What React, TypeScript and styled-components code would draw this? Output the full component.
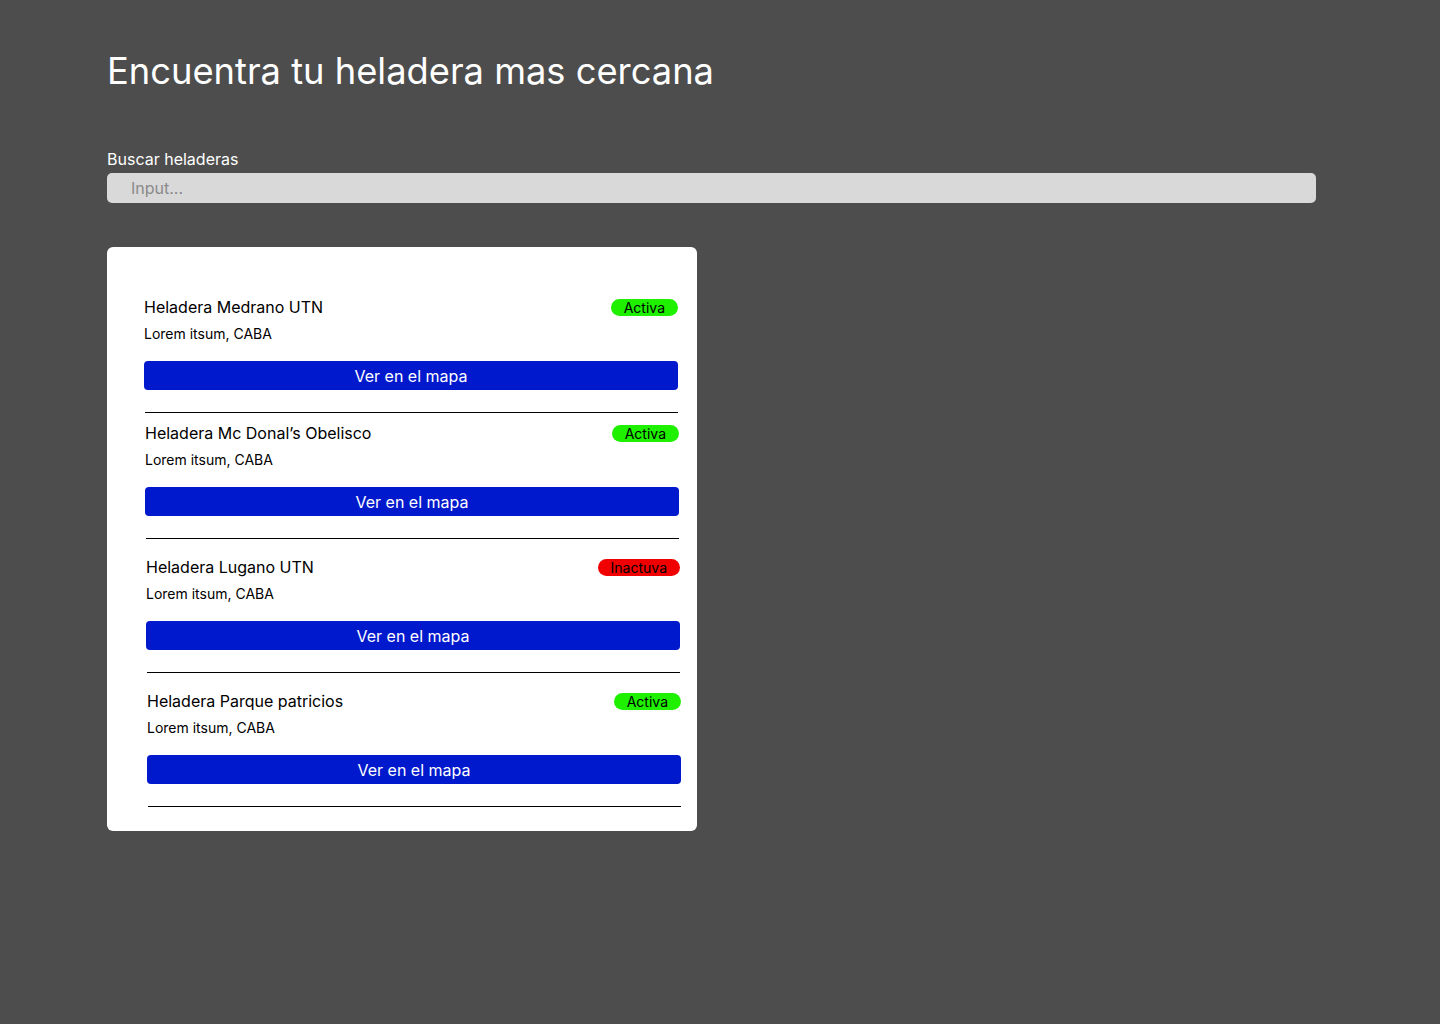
import React from "react";
import styled, { createGlobalStyle } from "styled-components";

const GlobalStyle = createGlobalStyle`
  * { box-sizing: border-box; }
  html, body { margin: 0; padding: 0; background: #4d4d4d; }
  body { font-family: Inter, "Noto Sans", sans-serif; }
`;

const Page = styled.main`
  min-height: 1024px;
  background: #4d4d4d;
  padding: 49px 124px 0 107px;
`;

const Title = styled.h1`
  margin: 0;
  font-size: 36.3px;
  line-height: 44px;
  font-weight: 400;
  color: #ffffff;
`;

const SearchField = styled.label`
  display: flex;
  flex-direction: column;
  gap: 4px;
  margin-top: 57px;
`;

const FieldLabel = styled.span`
  font-size: 16px;
  line-height: 19px;
  color: #ffffff;
`;

const SearchInput = styled.input`
  height: 30px;
  width: 1209px;
  border: none;
  border-radius: 5px;
  background: #d9d9d9;
  padding: 0 24px;
  font-family: Inter, sans-serif;
  font-size: 16px;
  color: #222;
  outline: none;
  &::placeholder { color: #8a8a8a; }
`;

const Card = styled.section`
  margin-top: 44px;
  width: 590px;
  background: #ffffff;
  border-radius: 6px;
  padding: 50px 16px 24px 37px;
  display: flex;
  flex-direction: column;
`;

const Item = styled.article<{ $shift: number; $gap: number }>`
  display: flex;
  flex-direction: column;
  margin-top: ${(p) => p.$gap}px;
  padding-left: ${(p) => p.$shift}px;
  margin-right: ${(p) => 3 - p.$shift}px;
`;

const Header = styled.div`
  display: flex;
  align-items: center;
  justify-content: space-between;
  height: 20px;
`;

const Name = styled.h2`
  margin: 0;
  font-size: 16px;
  line-height: 20px;
  font-weight: 400;
  color: #000;
`;

const Badge = styled.span<{ $active: boolean }>`
  display: inline-flex;
  align-items: center;
  justify-content: center;
  height: 17px;
  padding: 0 13px;
  border-radius: 9px;
  background: ${(p) => (p.$active ? "#1ff000" : "#f00000")};
  color: #000;
  font-size: 14px;
  line-height: 17px;
`;

const Address = styled.p`
  margin: 8px 0 0;
  font-size: 14px;
  line-height: 17px;
  color: #000;
`;

const MapButton = styled.button`
  margin-top: 19px;
  height: 29px;
  border: none;
  border-radius: 4px;
  background: #0019cc;
  color: #ffffff;
  font-family: Inter, sans-serif;
  font-size: 16px;
  line-height: 29px;
  cursor: pointer;
`;

const Divider = styled.hr`
  margin: 22px 0 0 1px;
  border: none;
  height: 1px;
  background: #000;
`;

const items = [
  { name: "Heladera Medrano UTN", active: true, gap: 0 },
  { name: "Heladera Mc Donal’s Obelisco", active: true, gap: 10 },
  { name: "Heladera Lugano UTN", active: false, gap: 18 },
  { name: "Heladera Parque patricios", active: true, gap: 18 },
];

export default function App() {
  return (
    <>
      <GlobalStyle />
      <Page>
        <Title>Encuentra tu heladera mas cercana</Title>
        <SearchField>
          <FieldLabel>Buscar heladeras</FieldLabel>
          <SearchInput placeholder="Input..." />
        </SearchField>
        <Card>
          {items.map((it, i) => (
            <Item key={it.name} $shift={i} $gap={it.gap}>
              <Header>
                <Name>{it.name}</Name>
                <Badge $active={it.active}>{it.active ? "Activa" : "Inactuva"}</Badge>
              </Header>
              <Address>Lorem itsum, CABA</Address>
              <MapButton>Ver en el mapa</MapButton>
              <Divider />
            </Item>
          ))}
        </Card>
      </Page>
    </>
  );
}
